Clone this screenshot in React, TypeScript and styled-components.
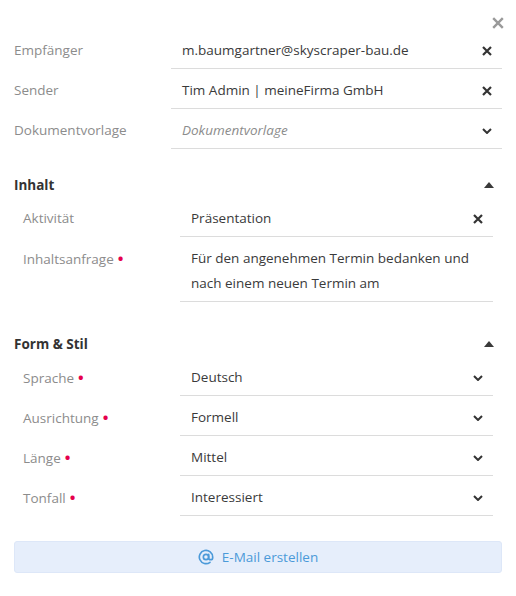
import styled, { createGlobalStyle } from "styled-components";
import { AtSign } from "lucide-react";

const GlobalStyle = createGlobalStyle`
  html, body {
    margin: 0;
    padding: 0;
    background: #ffffff;
  }
  body {
    font-family: "Open Sans", "Noto Sans", "Liberation Sans", sans-serif;
    font-size: 13.5px;
    color: #3a3a3a;
  }
`;

const Cross = ({ size = 10, color = "#333", weight = 2.2 }: { size?: number; color?: string; weight?: number }) => (
  <svg width={size} height={size} viewBox="0 0 10 10">
    <path d="M1 1 L9 9 M9 1 L1 9" stroke={color} strokeWidth={weight} strokeLinecap="butt" />
  </svg>
);

const Chevron = () => (
  <svg width="10" height="6" viewBox="0 0 10 6">
    <path d="M1 1 L5 5 L9 1" stroke="#333" strokeWidth="2" fill="none" />
  </svg>
);

const Caret = () => (
  <svg width="10" height="6" viewBox="0 0 10 6">
    <path d="M0 6 L5 0 L10 6 Z" fill="#3a3a3a" />
  </svg>
);

type Field = {
  label: string;
  value: string;
  required?: boolean;
  placeholder?: boolean;
  icon: "clear" | "select" | "none";
};

const general: Field[] = [
  { label: "Empfänger", value: "m.baumgartner@skyscraper-bau.de", icon: "clear" },
  { label: "Sender", value: "Tim Admin | meineFirma GmbH", icon: "clear" },
  { label: "Dokumentvorlage", value: "Dokumentvorlage", placeholder: true, icon: "select" },
];

const content: Field[] = [
  { label: "Aktivität", value: "Präsentation", icon: "clear" },
  {
    label: "Inhaltsanfrage",
    value: "Für den angenehmen Termin bedanken und nach einem neuen Termin am",
    required: true,
    icon: "none",
  },
];

const style: Field[] = [
  { label: "Sprache", value: "Deutsch", required: true, icon: "select" },
  { label: "Ausrichtung", value: "Formell", required: true, icon: "select" },
  { label: "Länge", value: "Mittel", required: true, icon: "select" },
  { label: "Tonfall", value: "Interessiert", required: true, icon: "select" },
];

const Rows = ({ fields }: { fields: Field[] }) => (
  <>
    {fields.map((f) => (
      <Row key={f.label}>
        <Label>
          {f.label}
          {f.required && <Dot>•</Dot>}
        </Label>
        <Input>
          <Value $placeholder={f.placeholder} $withIcon={f.icon !== "none"}>
            {f.value}
          </Value>
          {f.icon === "clear" && (
            <IconSlot>
              <Cross />
            </IconSlot>
          )}
          {f.icon === "select" && (
            <IconSlot>
              <Chevron />
            </IconSlot>
          )}
        </Input>
      </Row>
    ))}
  </>
);

const App = () => {
  return (
    <Panel>
      <GlobalStyle />
      <TopBar>
        <CloseButton>
          <Cross size={12} color="#9a9a9a" weight={2} />
        </CloseButton>
      </TopBar>
      <Rows fields={general} />

      <Section>
        <SectionHead>
          <span>Inhalt</span>
          <Caret />
        </SectionHead>
        <SectionBody>
          <Rows fields={content} />
        </SectionBody>
      </Section>

      <Section>
        <SectionHead>
          <span>Form &amp; Stil</span>
          <Caret />
        </SectionHead>
        <SectionBody>
          <Rows fields={style} />
        </SectionBody>
      </Section>

      <CreateButton>
        <AtSign size={16} strokeWidth={2.5} />
        <span>E-Mail erstellen</span>
      </CreateButton>
    </Panel>
  );
};

export default App;

const Panel = styled.div`
  width: 516px;
  padding: 0 14px;
  box-sizing: border-box;
`;

const TopBar = styled.div`
  height: 29px;
  display: flex;
  justify-content: flex-end;
  align-items: flex-start;
  padding-top: 17px;
  box-sizing: border-box;
`;

const CloseButton = styled.div`
  width: 12px;
  height: 12px;
  margin-right: -2px;
  display: flex;
`;

const Row = styled.div`
  display: grid;
  grid-template-columns: 157px 1fr;
`;

const Label = styled.div`
  color: #8c8c8c;
  padding-top: 9px;
  line-height: 25px;
`;

const Dot = styled.span`
  color: #e5004c;
  margin-left: 4px;
  font-size: 15px;
  font-weight: 700;
`;

const Input = styled.div`
  display: flex;
  align-items: flex-start;
  padding: 9px 10px 5px 11px;
  line-height: 25px;
  border-bottom: 1px solid #dcdcdc;
`;

const Value = styled.div<{ $placeholder?: boolean; $withIcon?: boolean }>`
  flex: 1;
  color: ${(p) => (p.$placeholder ? "#8c8c8c" : "#3a3a3a")};
  font-style: ${(p) => (p.$placeholder ? "italic" : "normal")};
  padding-right: ${(p) => (p.$withIcon ? "20px" : "0")};
`;

const IconSlot = styled.div`
  height: 25px;
  display: flex;
  align-items: center;
`;

const Section = styled.div`
  margin-top: 24px;
  padding-bottom: 6px;
`;

const SectionHead = styled.div`
  height: 24px;
  display: flex;
  justify-content: space-between;
  align-items: center;
  font-weight: 700;
  color: #333;
  padding-right: 8px;
`;

const SectionBody = styled.div`
  padding: 0 9px;
`;

const CreateButton = styled.div`
  margin-top: 19px;
  height: 32px;
  box-sizing: border-box;
  border: 1px solid #dde7f8;
  border-radius: 3px;
  background: #e6eefb;
  color: #4b9ad9;
  display: flex;
  align-items: center;
  justify-content: center;
  gap: 8px;
  font-size: 13.5px;
`;
